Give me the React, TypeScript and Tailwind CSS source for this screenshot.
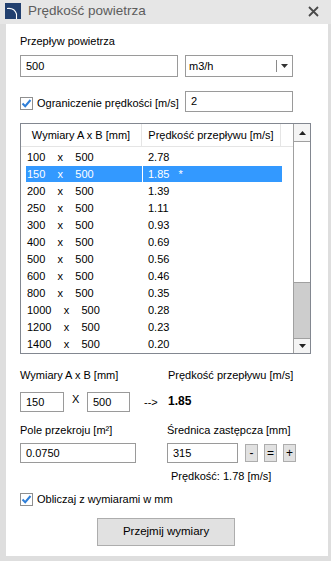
import React from "react";

const rows: [string, string, string][] = [
  ["100", "500", "2.78"],
  ["150", "500", "1.85"],
  ["200", "500", "1.39"],
  ["250", "500", "1.11"],
  ["300", "500", "0.93"],
  ["400", "500", "0.69"],
  ["500", "500", "0.56"],
  ["600", "500", "0.46"],
  ["800", "500", "0.35"],
  ["1000", "500", "0.28"],
  ["1200", "500", "0.23"],
  ["1400", "500", "0.20"],
];

function Check() {
  return (
    <svg width="13" height="13" viewBox="0 0 13 13" className="shrink-0">
      <rect x="0.5" y="0.5" width="12" height="12" fill="#fff" stroke="#8f8f8f" />
      <path d="M2.5 6.5 L5.2 9.2 L10.5 3" fill="none" stroke="#2f7fd8" strokeWidth="2" />
    </svg>
  );
}

function Box({ w, h, children, className = "" }: { w: string; h: string; children?: React.ReactNode; className?: string }) {
  return (
    <div className={`${w} ${h} border border-[#9a9a9a] bg-white flex items-center pl-[5px] shrink-0 ${className}`}>
      {children}
    </div>
  );
}

function SmallBtn({ label }: { label: string }) {
  return (
    <div className="w-[13px] h-[18px] border border-[#adadad] bg-[#e1e1e1] flex items-center justify-center text-[12px] leading-none">
      {label}
    </div>
  );
}

export default function App() {
  return (
    <div className="w-[331px] h-[561px] bg-[#dedede] flex flex-col font-['Liberation_Sans',Arial,sans-serif] text-[11px] text-black">
      {/* Title bar */}
      <div className="h-[24px] bg-[#e6e6e6] flex items-center pl-[5px] pr-[12px] shrink-0">
        <svg width="16" height="16" viewBox="0 0 16 16" className="shrink-0 -mt-[3px]">
          <rect width="16" height="16" fill="#22406f" />
          <path d="M2 5.5 Q9.5 4.5 11.5 11 L11.5 16" fill="none" stroke="#ffffff" strokeWidth="1.1" />
        </svg>
        <div className="ml-[7px] text-[13.5px] text-[#5d5d5d] leading-none -mt-[2px]">Prędkość powietrza</div>
        <div className="flex-1" />
        <svg width="11" height="11" viewBox="0 0 11 11" className="-mt-[1px]">
          <path d="M1 1 L10 10 M10 1 L1 10" stroke="#4a4a4a" strokeWidth="1.8" />
        </svg>
      </div>

      {/* Content */}
      <div className="flex-1 bg-white ml-[6px] mr-[3px] mb-[5px] pl-[14px] flex flex-col">
        <div className="mt-[9px] h-[16px] leading-[16px]">Przepływ powietrza</div>

        <div className="mt-[6px] flex items-center gap-[7px]">
          <Box w="w-[158px]" h="h-[22px]">500</Box>
          <div className="w-[108px] h-[22px] border border-[#9a9a9a] bg-white flex items-center pl-[3px] relative">
            <span>m3/h</span>
            <div className="absolute right-[15px] top-[4px] w-[1px] h-[12px] bg-[#8a8a8a]" />
            <svg width="7" height="4" viewBox="0 0 7 4" className="absolute right-[4px] top-[8px]">
              <path d="M0 0 L7 0 L3.5 4 Z" fill="#333" />
            </svg>
          </div>
        </div>

        <div className="mt-[14px] flex items-center">
          <div className="w-[165px] flex items-center gap-[4px] mt-[3px]">
            <Check />
            <span>Ograniczenie prędkości [m/s]</span>
          </div>
          <Box w="w-[108px]" h="h-[21px]">2</Box>
        </div>

        {/* Table */}
        <div className="mt-[11px] w-[291px] h-[231px] border border-[#828790] flex overflow-hidden">
          <div className="flex-1 flex flex-col overflow-hidden">
            <div className="h-[23px] flex border-b border-[#e5e5e5] shrink-0">
              <div className="w-[121px] flex items-center justify-center border-r border-[#e5e5e5]">Wymiary A x B [mm]</div>
              <div className="w-[139px] flex items-center justify-center border-r border-[#e5e5e5]">Prędkość przepływu [m/s]</div>
            </div>
            <div className="pt-[2px] pl-[5px] flex flex-col">
              {rows.map(([a, b, v], i) => {
                const sel = i === 1;
                return (
                  <div key={a} className={`h-[17px] flex shrink-0 ${sel ? "text-white" : ""}`}>
                    <div className={`w-[116px] h-[16px] pl-[1px] flex items-center whitespace-pre ${sel ? "bg-[#3399ff]" : ""}`}>
                      {`${a}    x    ${b}`}
                    </div>
                    <div className="w-[1px]" />
                    <div className={`w-[139px] h-[16px] pl-[5px] flex items-center whitespace-pre ${sel ? "bg-[#3399ff]" : ""}`}>
                      {sel ? `${v}   *` : v}
                    </div>
                  </div>
                );
              })}
            </div>
          </div>
          {/* Scrollbar */}
          <div className="w-[17px] flex flex-col border-l border-[#a0a0a0] bg-[#cdcdcd]">
            <div className="h-[18px] border-b border-[#a0a0a0] bg-[#f4f4f4] flex items-center justify-center">
              <svg width="7" height="4" viewBox="0 0 7 4"><path d="M0 4 L7 4 L3.5 0 Z" fill="#222" /></svg>
            </div>
            <div className="h-[141px] bg-white border-b border-[#a0a0a0]" />
            <div className="flex-1" />
            <div className="h-[15px] border-t border-[#a0a0a0] bg-[#f4f4f4] flex items-center justify-center">
              <svg width="7" height="4" viewBox="0 0 7 4"><path d="M0 0 L7 0 L3.5 4 Z" fill="#222" /></svg>
            </div>
          </div>
        </div>

        {/* Dimensions */}
        <div className="mt-[13px] h-[16px] flex items-center">
          <div className="w-[148px]">Wymiary A x B [mm]</div>
          <div>Prędkość przepływu [m/s]</div>
        </div>
        <div className="mt-[9px] flex items-start h-[20px]">
          <Box w="w-[44px]" h="h-[20px]">150</Box>
          <div className="w-[23px] pl-[8px] -mt-[1px]">X</div>
          <Box w="w-[43px]" h="h-[20px]">500</Box>
          <div className="w-[38px] pl-[14px] h-[20px] flex items-center">{"-->"}</div>
          <div className="h-[18px] flex items-center font-bold text-[12px]">1.85</div>
        </div>

        <div className="mt-[10px] h-[16px] flex items-center">
          <div className="w-[147px]">Pole przekroju [m²]</div>
          <div>Średnica zastępcza [mm]</div>
        </div>
        <div className="mt-[5px] flex items-center h-[20px]">
          <Box w="w-[116px]" h="h-[20px]">0.0750</Box>
          <div className="w-[31px]" />
          <Box w="w-[71px]" h="h-[20px]">315</Box>
          <div className="ml-[7px] flex gap-[6px]">
            <SmallBtn label="-" />
            <SmallBtn label="=" />
            <SmallBtn label="+" />
          </div>
        </div>

        <div className="mt-[6px] h-[14px] pl-[151px] flex items-center">Prędkość: 1.78 [m/s]</div>

        <div className="mt-[8px] h-[16px] flex items-center gap-[4px]">
          <Check />
          <span>Obliczaj z wymiarami w mm</span>
        </div>

        <div className="mt-[11px] pl-[77px]">
          <div className="w-[138px] h-[28px] border border-[#adadad] bg-[#e1e1e1] flex items-center justify-center text-[11.5px]">
            Przejmij wymiary
          </div>
        </div>
      </div>
    </div>
  );
}
